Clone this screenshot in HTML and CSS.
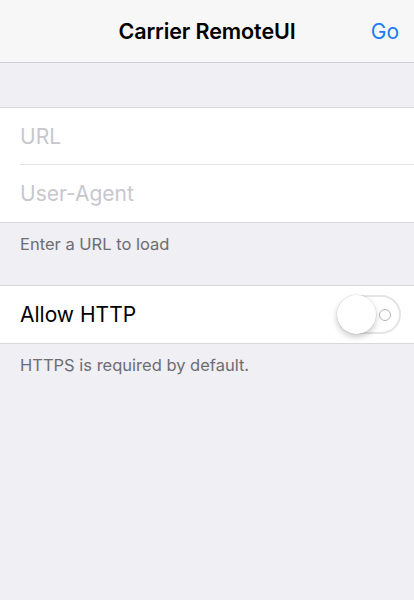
FILE: index.html
```html
<!DOCTYPE html>
<html>
<head>
<meta charset="utf-8">
<link rel="stylesheet" href="styles.css">
</head>
<body>
<header class="navbar">
  <div class="nav-side"></div>
  <div class="nav-title">Carrier RemoteUI</div>
  <div class="nav-side nav-right"><span class="nav-btn">Go</span></div>
</header>
<main class="content">
  <div class="spacer-top"></div>
  <section class="group">
    <div class="cell"><span class="placeholder">URL</span></div>
    <div class="cell"><span class="placeholder">User-Agent</span></div>
  </section>
  <div class="footer">Enter a URL to load</div>
  <section class="group">
    <div class="cell cell-row">
      <span class="label">Allow HTTP</span>
      <span class="switch"><span class="switch-o"></span><span class="knob"></span></span>
    </div>
  </section>
  <div class="footer">HTTPS is required by default.</div>
</main>
</body>
</html>
```
FILE: styles.css
```css
html, body {
  margin: 0;
  padding: 0;
  background: #efeff4;
  font-family: Inter, "Noto Sans", "Liberation Sans", sans-serif;
  height: 100%;
}
.navbar {
  height: 62px;
  background: #f7f7f8;
  border-bottom: 1px solid #cfcfd2;
  display: flex;
  align-items: center;
}
.nav-side {
  width: 90px;
}
.nav-right {
  display: flex;
  justify-content: flex-end;
  padding-right: 15px;
  box-sizing: border-box;
}
.nav-title {
  flex: 1;
  text-align: center;
  font-size: 21.5px;
  font-weight: 600;
  color: #000;
  letter-spacing: -0.1px;
}
.nav-btn {
  color: #1a7cf2;
  font-size: 21px;
}
.spacer-top {
  height: 44px;
}
.group {
  background: #fff;
  border-top: 1px solid #d9d9dd;
  border-bottom: 1px solid #d9d9dd;
}
.cell {
  height: 57px;
  margin-left: 20px;
  display: flex;
  align-items: center;
  box-sizing: border-box;
  border-bottom: 1px solid #e3e3e6;
}
.cell:last-child {
  border-bottom: none;
}
.placeholder {
  color: #c7c7cd;
  font-size: 21px;
}
.label {
  color: #000;
  font-size: 21px;
}
.cell-row {
  justify-content: space-between;
  padding-right: 13px;
}
.switch {
  position: relative;
  width: 64px;
  height: 39px;
  border-radius: 20px;
  border: 2px solid #e5e5e8;
  box-sizing: border-box;
  background: #fff;
}
.switch-o {
  position: absolute;
  right: 8px;
  top: 11.5px;
  width: 12px;
  height: 12px;
  border-radius: 50%;
  border: 1.5px solid #b3b3b3;
  box-sizing: border-box;
}
.knob {
  position: absolute;
  left: -2px;
  top: -2px;
  width: 39px;
  height: 39px;
  border-radius: 50%;
  background: #fff;
  box-shadow: 0 3px 6px rgba(0,0,0,0.22), 0 0 0 0.5px rgba(0,0,0,0.08);
}
.footer {
  color: #6d6d72;
  font-size: 16.5px;
  padding: 11px 20px 0;
  height: 62px;
  box-sizing: border-box;
}
```
